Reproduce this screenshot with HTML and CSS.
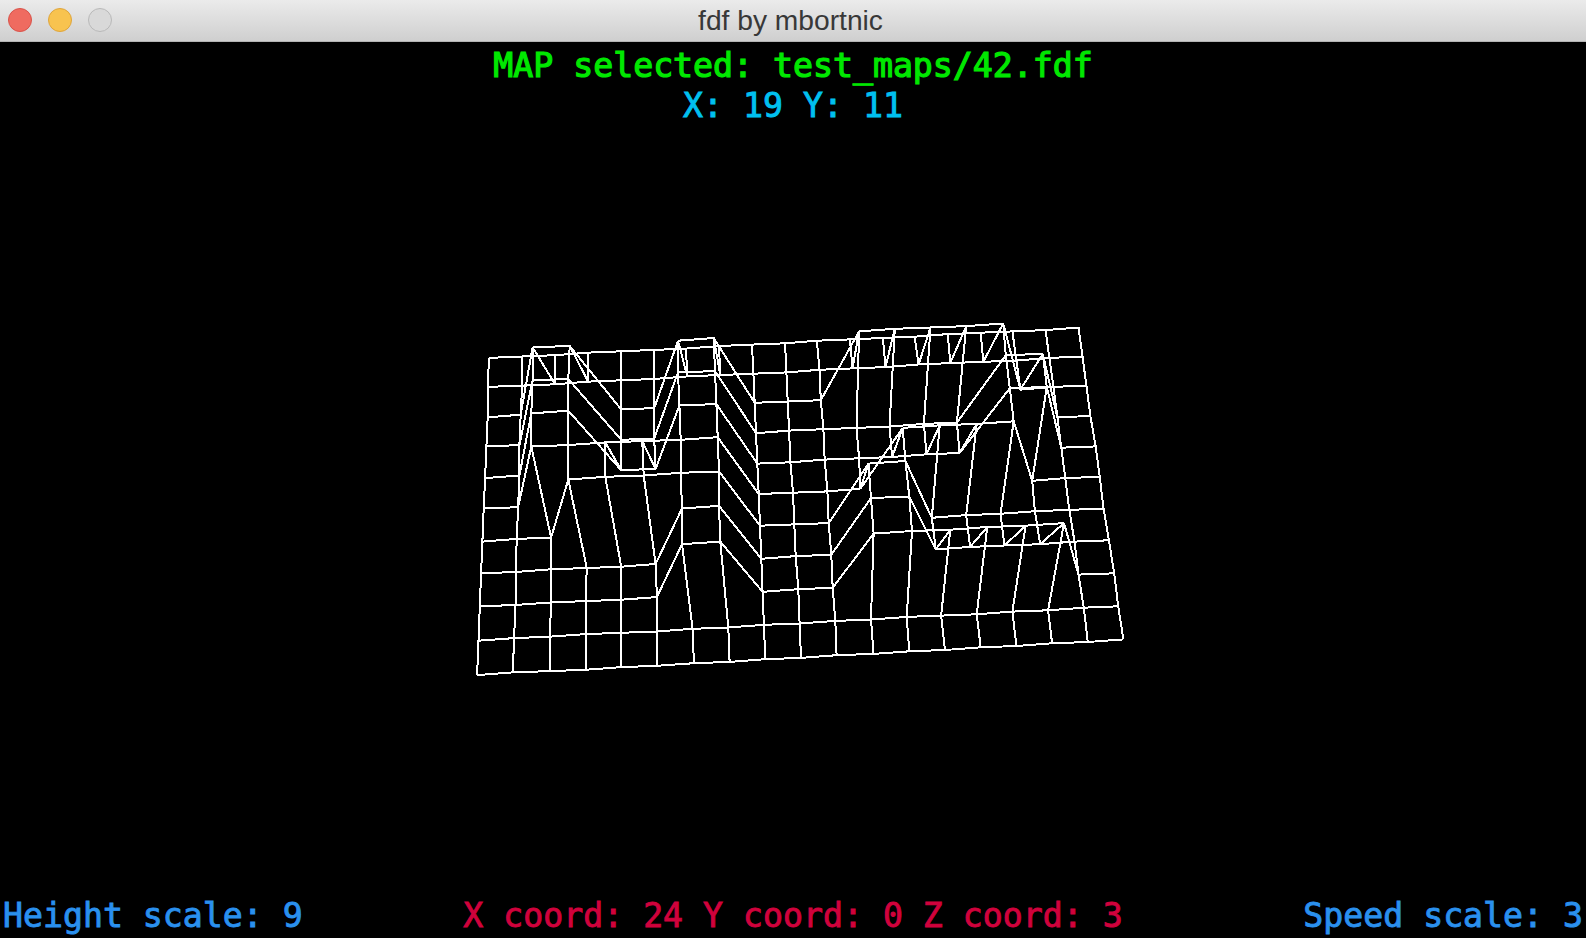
FILE: index.html
```html
<!DOCTYPE html>
<html lang="en">
<head>
<meta charset="utf-8">
<title>fdf by mbortnic</title>
<link rel="stylesheet" href="styles.css">
</head>
<body>
<div class="window">
  <header class="titlebar">
    <div class="lights">
      <span class="light light-close"></span>
      <span class="light light-min"></span>
      <span class="light light-max"></span>
    </div>
    <div class="title">fdf by mbortnic</div>
  </header>
  <main class="canvas">
    <svg class="wire" id="wire" width="1586" height="897" viewBox="0 41 1586 897"></svg>
    <div class="info">
      <div class="line green">MAP selected: test_maps/42.fdf</div>
      <div class="line cyan">X: 19 Y: 11</div>
    </div>
    <div class="status">
      <div class="line blue">Height scale: 9</div>
      <div class="line red">X coord: 24 Y coord: 0 Z coord: 3</div>
      <div class="line blue right">Speed scale: 3</div>
    </div>
  </main>
</div>
<script src="wireframe.js"></script>
</body>
</html>
```
FILE: styles.css
```css
* { box-sizing: border-box; }
html, body { margin: 0; padding: 0; height: 100%; background: #000; }
.window { display: flex; flex-direction: column; height: 938px; width: 1586px; overflow: hidden; }
.titlebar {
  flex: 0 0 42px;
  position: relative;
  display: flex;
  align-items: center;
  justify-content: center;
  background: linear-gradient(#ebebeb, #cfcfcf);
  border-bottom: 1px solid #b4b4b4;
}
.lights { position: absolute; left: 8px; top: 8px; display: flex; gap: 16px; }
.light { width: 24px; height: 24px; border-radius: 50%; border: 1px solid; }
.light-close { background: #ef6b60; border-color: #d9534a; }
.light-min { background: #f8c34f; border-color: #dfa53c; }
.light-max { background: #d9d9d9; border-color: #b9b9b9; }
.title { font: 28.2px/38px "Liberation Sans", Arial, sans-serif; color: #383838; padding: 0 5px 2px 0; }
.canvas { position: relative; flex: 1; display: flex; flex-direction: column; justify-content: space-between; background: #000; padding-top: 4px; padding-bottom: 2px; }
.wire { position: absolute; left: 0; top: 0; }
.wire line { stroke: #fff; stroke-width: 2; shape-rendering: crispEdges; }
.info { position: relative; text-align: center; }
.status { position: relative; display: grid; grid-template-columns: 1fr auto 1fr; padding: 0 3px; }
.line { font: 33.2px/40px "DejaVu Sans Mono", "Liberation Mono", monospace; white-space: pre; -webkit-text-stroke: 0.9px currentColor; }
.green { color: #00e800; -webkit-text-stroke-width: 1.2px; }
.cyan { color: #00c0f0; }
.blue { color: #2a90ee; }
.red { color: #d0023c; }
.right { text-align: right; }
```
FILE: wireframe.js
```js
var MAP = [
  "0000000000000000000",
  "0000000000000000000",
  "0011001100011111000",
  "0011001100000001100",
  "0011001100000001100",
  "0011111100001111000",
  "0001111100011000000",
  "0000001100011000000",
  "0000001100011111100",
  "0000000000000000000",
  "0000000000000000000"
];
var COLS = 18, ROWS = 10;
var SCALE = 1.3217; // the program drew on a 1200px wide window
var P0 = [489.5, 357], P1 = [1078, 327], P2 = [1123.5, 639], P3 = [477, 674];

function homography(p0, p1, p2, p3) {
  var dx1 = p1[0] - p2[0], dx2 = p3[0] - p2[0], sx = p0[0] - p1[0] + p2[0] - p3[0];
  var dy1 = p1[1] - p2[1], dy2 = p3[1] - p2[1], sy = p0[1] - p1[1] + p2[1] - p3[1];
  var d = dx1 * dy2 - dx2 * dy1;
  var g = (sx * dy2 - dx2 * sy) / d, h = (dx1 * sy - sx * dy1) / d;
  return function (u, v) {
    var w = g * u + h * v + 1;
    return [
      ((p1[0] - p0[0] + g * p1[0]) * u + (p3[0] - p0[0] + h * p3[0]) * v + p0[0]) / w,
      ((p1[1] - p0[1] + g * p1[1]) * u + (p3[1] - p0[1] + h * p3[1]) * v + p0[1]) / w
    ];
  };
}
var ground = homography(P0, P1, P2, P3);

function snap(v) {
  return Math.round(v / SCALE) * SCALE;
}

function point(c, r) {
  var g = ground(c / COLS, r / ROWS);
  if (MAP[r][c] === "1") g = [804 + 1.085 * (g[0] - 804), 1.076 * g[1] - 96.8];
  return [snap(g[0]), snap(g[1])];
}

var svg = document.getElementById("wire");
function seg(a, b) {
  var l = document.createElementNS("http://www.w3.org/2000/svg", "line");
  l.setAttribute("x1", a[0].toFixed(1));
  l.setAttribute("y1", a[1].toFixed(1));
  l.setAttribute("x2", b[0].toFixed(1));
  l.setAttribute("y2", b[1].toFixed(1));
  svg.appendChild(l);
}
for (var r = 0; r <= ROWS; r++) {
  for (var c = 0; c <= COLS; c++) {
    if (c < COLS) seg(point(c, r), point(c + 1, r));
    if (r < ROWS) seg(point(c, r), point(c, r + 1));
  }
}
```
